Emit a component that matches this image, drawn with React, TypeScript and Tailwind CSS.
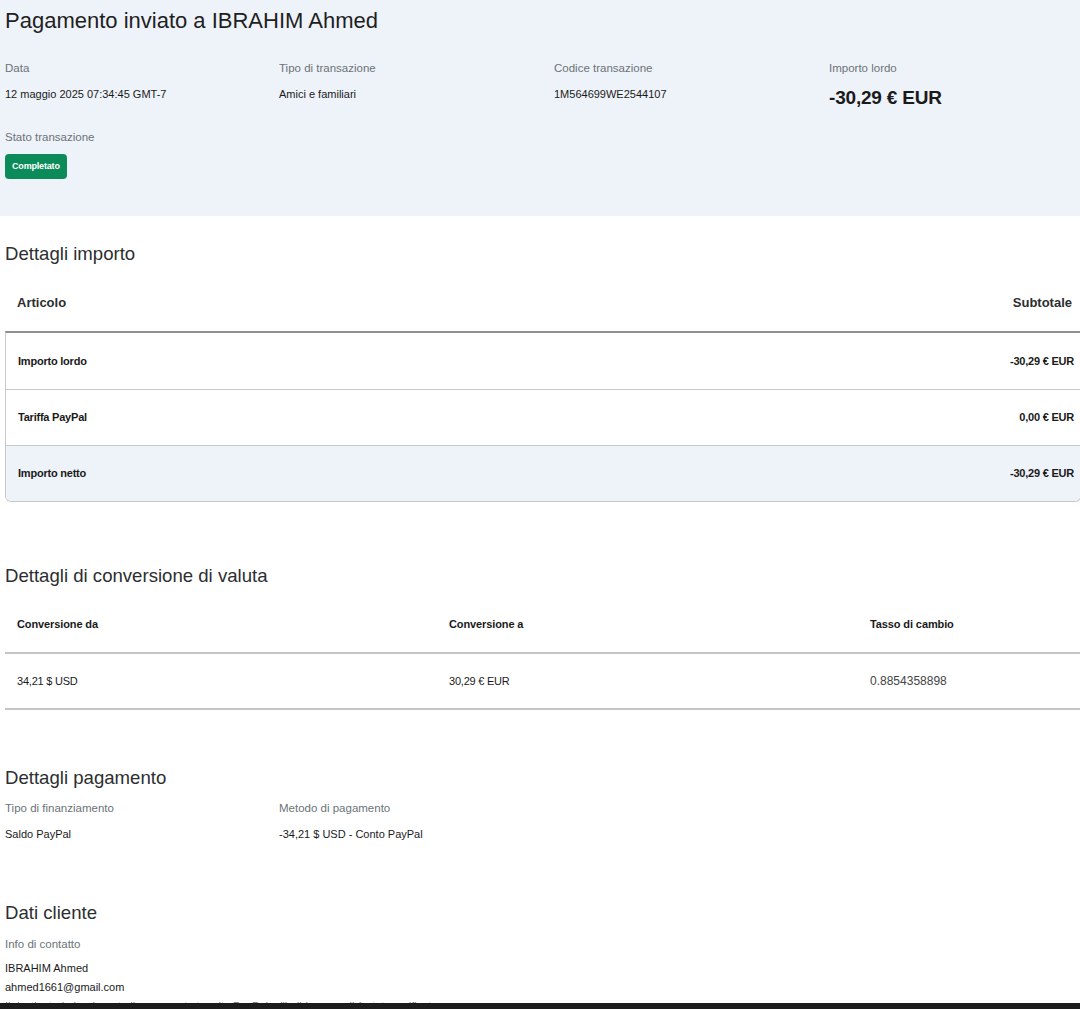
const body = "font-['Liberation_Sans',Arial,sans-serif]";

function Field({ label, value, big }: { label: string; value: string; big?: boolean }) {
  return (
    <div>
      <div className="text-[11.5px] leading-[14px] text-[#6c7378]">{label}</div>
      {big ? (
        <div className="mt-[12px] text-[19px] leading-[22px] font-bold tracking-[-0.01em] text-[#1a1a1a]">{value}</div>
      ) : (
        <div className="mt-[12px] text-[11px] leading-[14px] text-[#1a1a1a]">{value}</div>
      )}
    </div>
  );
}

function Heading({ children }: { children: string }) {
  return <h2 className="text-[18.6px] leading-[22px] text-[#2c2e2f]">{children}</h2>;
}

const amountRows = [
  { label: "Importo lordo", value: "-30,29 € EUR", shaded: false },
  { label: "Tariffa PayPal", value: "0,00 € EUR", shaded: false },
  { label: "Importo netto", value: "-30,29 € EUR", shaded: true },
];

export default function App() {
  return (
    <div className={`relative h-[1009px] overflow-hidden bg-white ${body}`}>
      <section className="h-[216px] bg-[#eef2f9] px-[5px] pt-[8px]">
        <h1 className="text-[22px] leading-[26px] text-[#1f1f1f]">Pagamento inviato a IBRAHIM Ahmed</h1>
        <div className="mt-[27px] grid grid-cols-[274px_275px_275px_1fr]">
          <Field label="Data" value="12 maggio 2025 07:34:45 GMT-7" />
          <Field label="Tipo di transazione" value="Amici e familiari" />
          <Field label="Codice transazione" value="1M564699WE2544107" />
          <Field label="Importo lordo" value="-30,29 € EUR" big />
        </div>
        <div className="mt-[21px] text-[11.5px] leading-[14px] text-[#6c7378]">Stato transazione</div>
        <span className="mt-[10px] inline-flex h-[25px] items-center rounded-[4px] bg-[#0b8a5a] px-[7px] text-[9px] font-bold tracking-[-0.02em] text-white">
          Completato
        </span>
      </section>

      <section className="px-[5px] pt-[27px]">
        <Heading>Dettagli importo</Heading>
        <div className="mt-[10px] flex h-[56px] items-center justify-between pl-[12px] pr-[3px] text-[13px] font-bold text-[#2c2e2f]">
          <span>Articolo</span>
          <span>Subtotale</span>
        </div>
        <div className="-mr-[6px] overflow-hidden rounded-b-[6px] border border-t-2 border-[#c9c9c9] border-t-[#8f8f8f]">
          {amountRows.map((r, i) => (
            <div
              key={r.label}
              className={`flex h-[56px] items-center justify-between pl-[12px] pr-[6px] text-[11px] font-bold tracking-[-0.02em] text-[#1a1a1a] ${i > 0 ? "border-t border-[#c9c9c9]" : ""} ${r.shaded ? "bg-[#eef2f9]" : ""}`}
            >
              <span>{r.label}</span>
              <span>{r.value}</span>
            </div>
          ))}
        </div>
      </section>

      <section className="px-[5px] pt-[63px]">
        <Heading>Dettagli di conversione di valuta</Heading>
        <div className="-mr-[5px] mt-[9px] grid h-[58px] grid-cols-[432px_421px_1fr] items-center border-b-2 border-[#c4c4c4] pl-[12px] text-[11px] font-bold tracking-[-0.01em] text-[#1a1a1a]">
          <span>Conversione da</span>
          <span>Conversione a</span>
          <span>Tasso di cambio</span>
        </div>
        <div className="-mr-[5px] grid h-[56px] grid-cols-[432px_421px_1fr] items-center border-b-2 border-[#c4c4c4] pl-[12px] text-[11px] tracking-[-0.02em] text-[#1a1a1a]">
          <span>34,21 $ USD</span>
          <span>30,29 € EUR</span>
          <span className="text-[12px] tracking-normal text-[#444]">0.8854358898</span>
        </div>
      </section>

      <section className="px-[5px] pt-[57px]">
        <Heading>Dettagli pagamento</Heading>
        <div className="mt-[12px] grid grid-cols-[274px_1fr]">
          <Field label="Tipo di finanziamento" value="Saldo PayPal" />
          <Field label="Metodo di pagamento" value="-34,21 $ USD - Conto PayPal" />
        </div>
      </section>

      <section className="px-[5px] pt-[61px]">
        <Heading>Dati cliente</Heading>
        <div className="mt-[13px] text-[11.5px] leading-[14px] text-[#6c7378]">Info di contatto</div>
        <div className="mt-[8px] text-[11px] leading-[19px] text-[#1a1a1a]">
          <div>IBRAHIM Ahmed</div>
          <div>ahmed1661@gmail.com</div>
          <div className="text-[#6c7378]">Il destinatario ha ricevuto il pagamento tramite PayPal e l'indirizzo email è stato verificato</div>
        </div>
      </section>

      <div className="absolute inset-x-0 bottom-0 h-[6px] bg-[#1c1c1c]" />
    </div>
  );
}
